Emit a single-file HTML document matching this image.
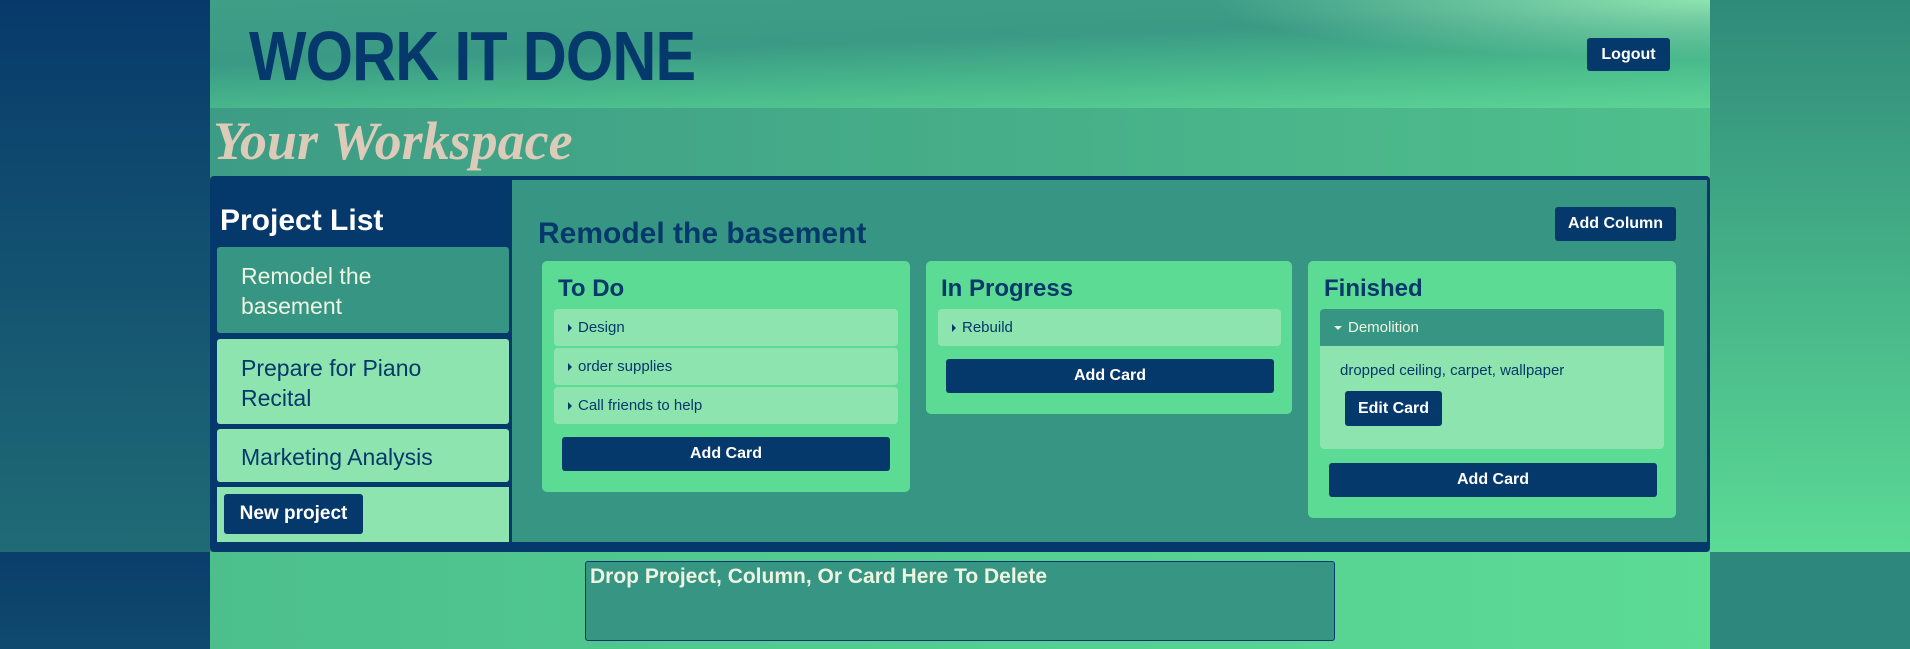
<!DOCTYPE html>
<html><head><style>
*{box-sizing:border-box;margin:0;padding:0}
body{width:1910px;height:649px;overflow:hidden;font-family:"Liberation Sans",sans-serif;position:relative;background:#2e877c}
.abs{position:absolute}
#lt{left:0;top:0;width:210px;height:552px;background:linear-gradient(180deg,#073a6b,#206b76)}
#rt{left:1710px;top:0;width:200px;height:552px;background:linear-gradient(180deg,#2f8a7a,#5cdb95)}
#lb{left:0;top:552px;width:210px;height:97px;background:linear-gradient(180deg,#0a3e6b,#0f4a6e)}
#rb{left:1710px;top:552px;width:200px;height:97px;background:#2e877c}
#cb{left:210px;top:552px;width:1500px;height:97px;background:linear-gradient(90deg,#4cbf8d,#5cdb95)}
#hdr{left:210px;top:0;width:1500px;height:108px;background:radial-gradient(ellipse 500px 60px at 100% 0%,#8ee4af,rgba(142,228,175,0)),linear-gradient(178deg,#3e9e86 0%,#3a9a85 40%,#4cbf8d 75%,#5cd395 100%)}
#mid{left:210px;top:108px;width:1500px;height:444px;background:linear-gradient(90deg,#3d9c85,#4fbf8c)}
.btn{background:#05386b;color:#fff;font-weight:bold;border-radius:3px;display:flex;align-items:center;justify-content:center;font-size:16px}
.card{background:#8ee4af;border-radius:4px;color:#05386b;font-size:15px;padding-left:14px;display:flex;align-items:center}
.tri{display:inline-block;width:0;height:0;border-top:4px solid transparent;border-bottom:4px solid transparent;border-left:4px solid #05386b;margin-right:6px}
.col{background:#5cdb95;border-radius:5px}
.ct{font-size:24px;font-weight:bold;color:#05386b}
.pi{background:#8ee4af;color:#05386b;font-size:23px;padding-left:24px;border-radius:3px}
</style></head><body>
<div class="abs" id="lt"></div><div class="abs" id="rt"></div>
<div class="abs" id="lb"></div><div class="abs" id="rb"></div><div class="abs" id="cb"></div>
<div class="abs" id="hdr"></div><div class="abs" id="mid"></div>
<div class="abs" style="left:249px;top:16px;font-size:70px;font-weight:bold;color:#05386b;letter-spacing:-1px;transform:scaleX(0.87);transform-origin:left">WORK IT DONE</div>
<div class="abs btn" style="left:1587px;top:38px;width:83px;height:33px">Logout</div>
<div class="abs" style="left:213px;top:110px;font-family:'Liberation Serif',serif;font-style:italic;font-weight:bold;font-size:54px;color:#dccbb9">Your Workspace</div>
<div class="abs" style="left:210px;top:176px;width:1500px;height:376px;background:#05386b;border-radius:4px"></div>
<div class="abs" style="left:512px;top:180px;width:1195px;height:362px;background:#379683"></div>
<div class="abs" style="left:220px;top:204px;font-size:30px;font-weight:bold;color:#fff">Project List</div>
<div class="abs pi" style="left:217px;top:247px;width:292px;height:86px;background:#379683;color:#edf5e1;padding-top:14px;line-height:30px">Remodel the<br>basement</div>
<div class="abs pi" style="left:217px;top:339px;width:292px;height:85px;padding-top:14px;line-height:30px">Prepare for Piano<br>Recital</div>
<div class="abs pi" style="left:217px;top:429px;width:292px;height:53px;line-height:56px">Marketing Analysis</div>
<div class="abs" style="left:217px;top:487px;width:292px;height:55px;background:#8ee4af"></div>
<div class="abs btn" style="left:224px;top:494px;width:139px;height:40px;font-size:19px">New project</div>
<div class="abs" style="left:538px;top:217px;font-size:30px;font-weight:bold;color:#05386b">Remodel the basement</div>
<div class="abs btn" style="left:1555px;top:207px;width:121px;height:34px">Add Column</div>

<div class="abs col" style="left:542px;top:261px;width:368px;height:231px"></div>
<div class="abs ct" style="left:558px;top:275px">To Do</div>
<div class="abs card" style="left:554px;top:309px;width:344px;height:37px"><span class="tri"></span>Design</div>
<div class="abs card" style="left:554px;top:348px;width:344px;height:37px"><span class="tri"></span>order supplies</div>
<div class="abs card" style="left:554px;top:387px;width:344px;height:37px"><span class="tri"></span>Call friends to help</div>
<div class="abs btn" style="left:562px;top:437px;width:328px;height:34px">Add Card</div>

<div class="abs col" style="left:926px;top:261px;width:366px;height:153px"></div>
<div class="abs ct" style="left:941px;top:275px">In Progress</div>
<div class="abs card" style="left:938px;top:309px;width:343px;height:37px"><span class="tri"></span>Rebuild</div>
<div class="abs btn" style="left:946px;top:359px;width:328px;height:34px">Add Card</div>

<div class="abs col" style="left:1308px;top:261px;width:368px;height:257px"></div>
<div class="abs ct" style="left:1324px;top:275px">Finished</div>
<div class="abs card" style="left:1320px;top:309px;width:344px;height:37px;background:#379683;color:#edf5e1;border-radius:4px 4px 0 0"><span style="display:inline-block;border-left:4px solid transparent;border-right:4px solid transparent;border-top:4px solid #edf5e1;margin-right:6px"></span>Demolition</div>
<div class="abs" style="left:1320px;top:346px;width:344px;height:103px;background:#8ee4af;border-radius:0 0 4px 4px"></div>
<div class="abs" style="left:1340px;top:362px;font-size:15px;color:#05386b">dropped ceiling, carpet, wallpaper</div>
<div class="abs btn" style="left:1345px;top:391px;width:97px;height:35px">Edit Card</div>
<div class="abs btn" style="left:1329px;top:463px;width:328px;height:34px">Add Card</div>

<div class="abs" style="left:585px;top:561px;width:750px;height:80px;background:#379683;border:1px solid #05386b;border-radius:3px;padding:3px 4px;font-size:21px;font-weight:bold;color:#edf5e1">Drop Project, Column, Or Card Here To Delete</div>
</body></html>
